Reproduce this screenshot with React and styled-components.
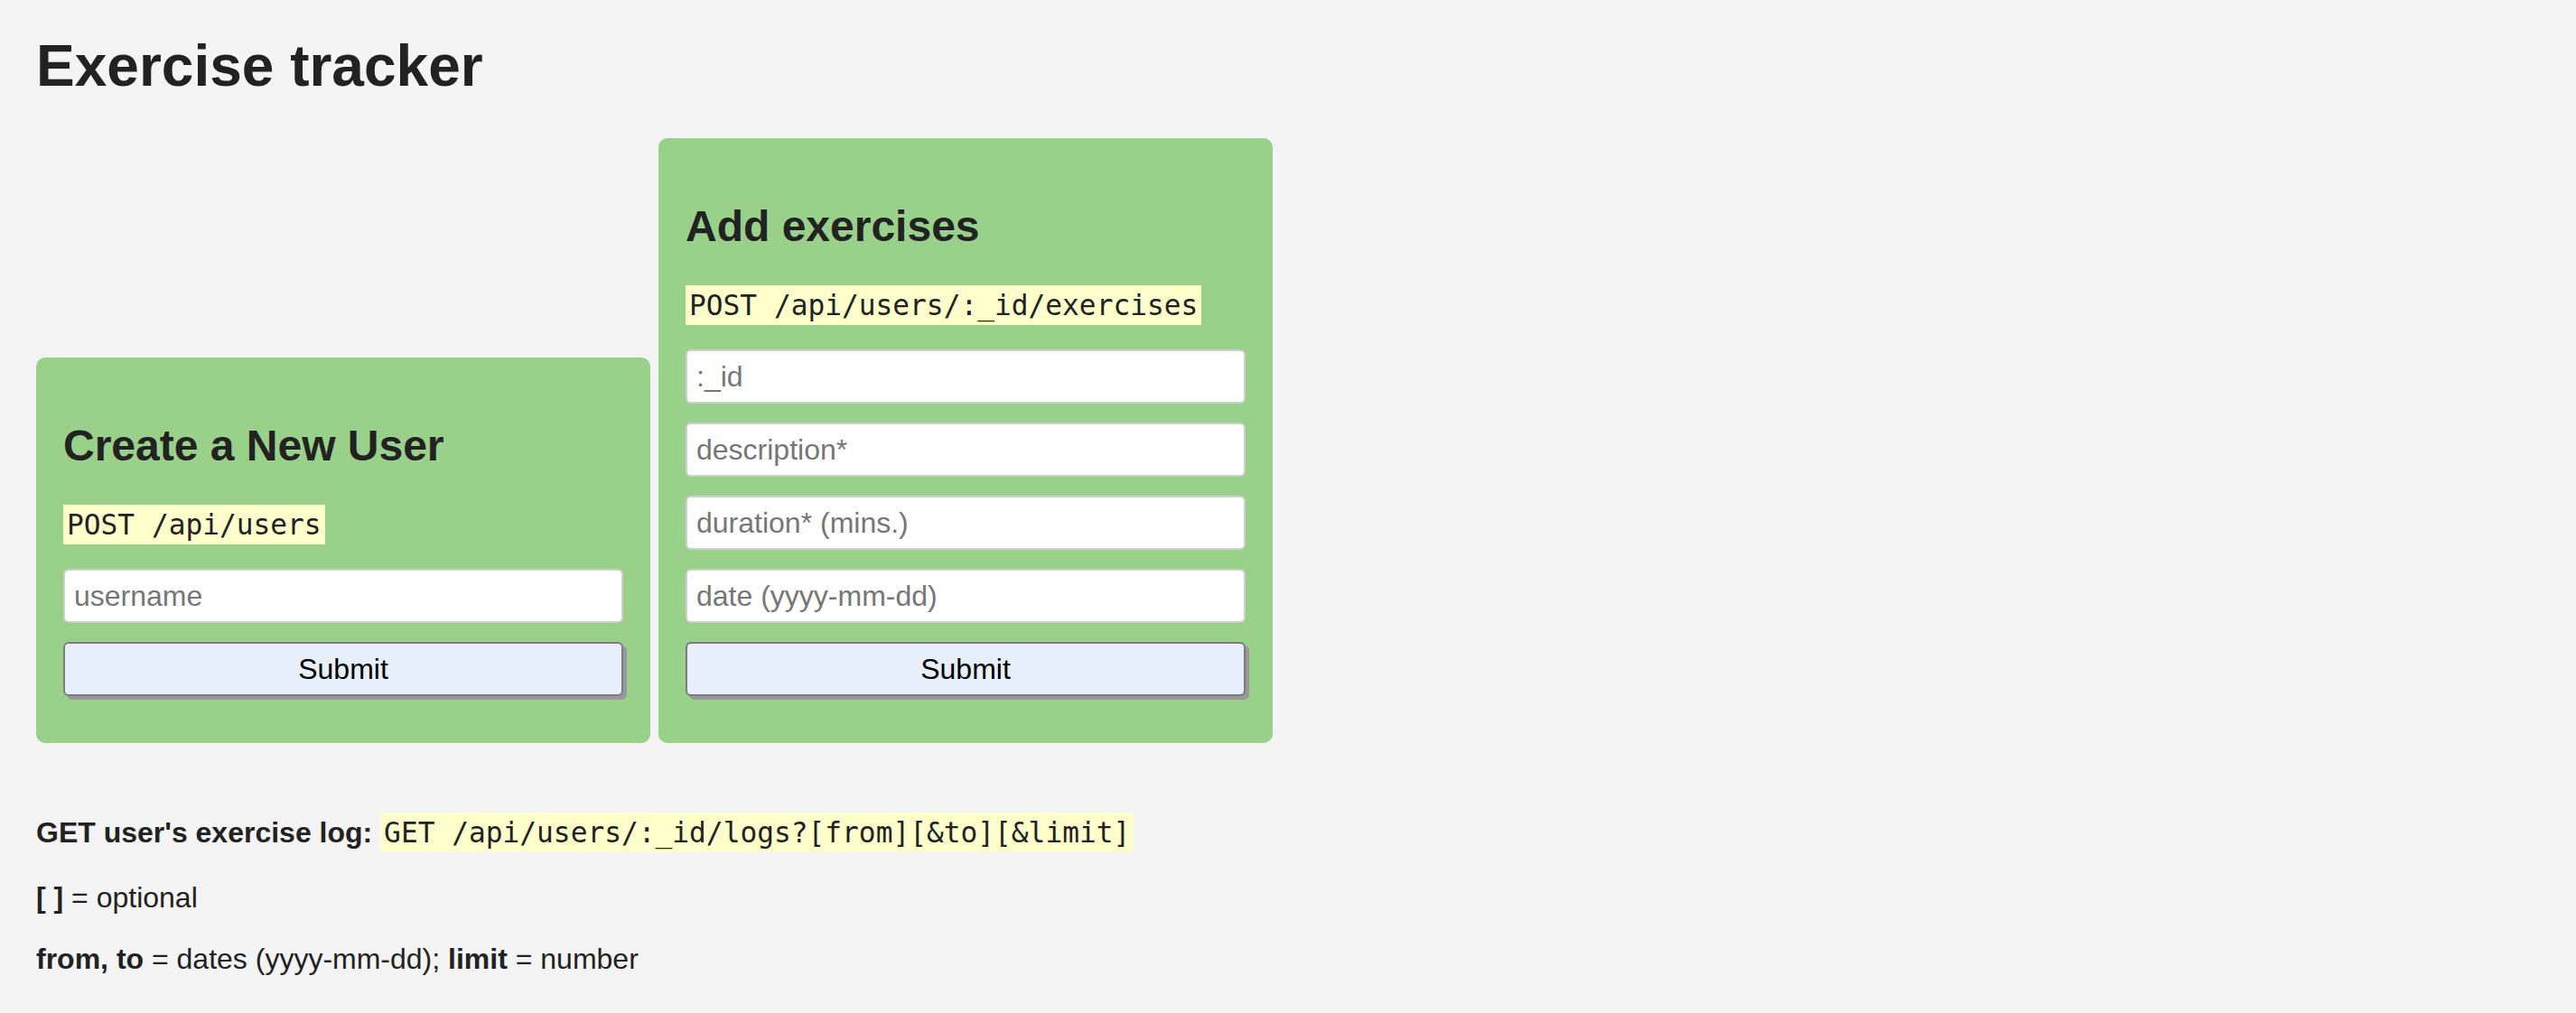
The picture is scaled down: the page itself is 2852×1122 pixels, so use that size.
import React from 'react';
import styled, { createGlobalStyle } from 'styled-components';

const GlobalStyle = createGlobalStyle`
  * {
    box-sizing: border-box;
  }

  body {
    margin: 0;
    background: #f4f4f4;
    color: #222;
    font-family: "Liberation Sans", Arial, Helvetica, sans-serif;
    font-size: 32px;
  }
`;

const Page = styled.div`
  padding: 36px 40px 40px;
`;

const Title = styled.h1`
  margin: 0;
  font-size: 64px;
  line-height: 74px;
  font-weight: 700;
`;

const Forms = styled.div`
  display: flex;
  align-items: flex-end;
  gap: 9px;
  margin-top: 43px;
`;

const Card = styled.form`
  display: flex;
  flex-direction: column;
  width: 680px;
  padding: 30px 30px 52px;
  background: #99d18a;
  border-radius: 10px;
`;

const CardTitle = styled.h2`
  margin: 40px 0 0;
  font-size: 48px;
  line-height: 56px;
  font-weight: 700;
`;

const Code = styled.code`
  font-family: "DejaVu Sans Mono", "Liberation Mono", monospace;
  font-size: 31.2px;
  padding: 4px;
  background: #ffffcc;
  color: #222;
`;

const Endpoint = styled(Code)`
  display: block;
  align-self: flex-start;
  margin: 37px 0 27px;
  line-height: normal;
`;

const Field = styled.input`
  display: block;
  width: 100%;
  height: 60px;
  margin: 0 0 21px;
  padding: 0 10px;
  border: 2px solid #cfcfcf;
  border-radius: 6px;
  background: #fff;
  font-family: "Liberation Sans", Arial, sans-serif;
  font-size: 32px;
  color: #222;

  &::placeholder {
    color: #767676;
  }
`;

const SubmitButton = styled.button`
  display: block;
  width: 100%;
  height: 60px;
  border: 2px solid #7c7c7c;
  border-radius: 6px;
  background: #e6effb;
  box-shadow: 4px 4px 0 #999;
  font-family: "Liberation Sans", Arial, sans-serif;
  font-size: 32px;
  color: #000;
`;

const Notes = styled.div`
  margin-top: 81px;
`;

const Note = styled.p`
  margin: 0 0 ${(p) => (p.$spaced ? 35 : 31)}px;
  line-height: 37px;
`;

const forms = [
  {
    id: 'new-user',
    title: 'Create a New User',
    endpoint: 'POST /api/users',
    fields: ['username'],
  },
  {
    id: 'add-exercise',
    title: 'Add exercises',
    endpoint: 'POST /api/users/:_id/exercises',
    fields: [':_id', 'description*', 'duration* (mins.)', 'date (yyyy-mm-dd)'],
  },
];

function App() {
  return (
    <>
      <GlobalStyle />
      <Page>
        <Title>Exercise tracker</Title>

        <Forms>
          {forms.map((form) => (
            <Card key={form.id} onSubmit={(e) => e.preventDefault()}>
              <CardTitle>{form.title}</CardTitle>
              <Endpoint>{form.endpoint}</Endpoint>
              {form.fields.map((field) => (
                <Field key={field} type="text" placeholder={field} />
              ))}
              <SubmitButton type="submit">Submit</SubmitButton>
            </Card>
          ))}
        </Forms>

        <Notes>
          {/* the line with the code is a bit taller */}
          <Note $spaced>
            <b>GET user&apos;s exercise log:</b>
            {' '}
            <Code>GET /api/users/:_id/logs?[from][&amp;to][&amp;limit]</Code>
          </Note>
          <Note>
            <b>[ ]</b>
            {' = optional'}
          </Note>
          <Note>
            <b>from, to</b>
            {' = dates (yyyy-mm-dd); '}
            <b>limit</b>
            {' = number'}
          </Note>
        </Notes>
      </Page>
    </>
  );
}

export default App;
